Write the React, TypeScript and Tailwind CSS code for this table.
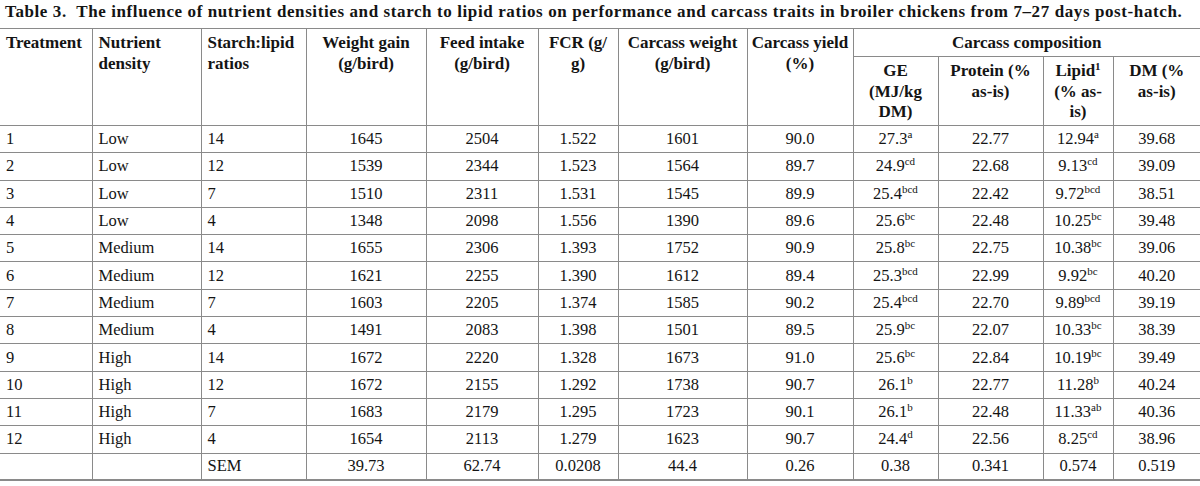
const cols = [92, 109, 105, 120, 112, 80, 129, 106, 85, 105, 70, 87];

type Row = {
	t: string;
	n: string;
	r: string;
	wg: string;
	fi: string;
	fcr: string;
	cw: string;
	cy: string;
	ge: [string, string];
	pr: string;
	li: [string, string];
	dm: string;
};

const rows: Row[] = [
	{ t: "1", n: "Low", r: "14", wg: "1645", fi: "2504", fcr: "1.522", cw: "1601", cy: "90.0", ge: ["27.3", "a"], pr: "22.77", li: ["12.94", "a"], dm: "39.68" },
	{ t: "2", n: "Low", r: "12", wg: "1539", fi: "2344", fcr: "1.523", cw: "1564", cy: "89.7", ge: ["24.9", "cd"], pr: "22.68", li: ["9.13", "cd"], dm: "39.09" },
	{ t: "3", n: "Low", r: "7", wg: "1510", fi: "2311", fcr: "1.531", cw: "1545", cy: "89.9", ge: ["25.4", "bcd"], pr: "22.42", li: ["9.72", "bcd"], dm: "38.51" },
	{ t: "4", n: "Low", r: "4", wg: "1348", fi: "2098", fcr: "1.556", cw: "1390", cy: "89.6", ge: ["25.6", "bc"], pr: "22.48", li: ["10.25", "bc"], dm: "39.48" },
	{ t: "5", n: "Medium", r: "14", wg: "1655", fi: "2306", fcr: "1.393", cw: "1752", cy: "90.9", ge: ["25.8", "bc"], pr: "22.75", li: ["10.38", "bc"], dm: "39.06" },
	{ t: "6", n: "Medium", r: "12", wg: "1621", fi: "2255", fcr: "1.390", cw: "1612", cy: "89.4", ge: ["25.3", "bcd"], pr: "22.99", li: ["9.92", "bc"], dm: "40.20" },
	{ t: "7", n: "Medium", r: "7", wg: "1603", fi: "2205", fcr: "1.374", cw: "1585", cy: "90.2", ge: ["25.4", "bcd"], pr: "22.70", li: ["9.89", "bcd"], dm: "39.19" },
	{ t: "8", n: "Medium", r: "4", wg: "1491", fi: "2083", fcr: "1.398", cw: "1501", cy: "89.5", ge: ["25.9", "bc"], pr: "22.07", li: ["10.33", "bc"], dm: "38.39" },
	{ t: "9", n: "High", r: "14", wg: "1672", fi: "2220", fcr: "1.328", cw: "1673", cy: "91.0", ge: ["25.6", "bc"], pr: "22.84", li: ["10.19", "bc"], dm: "39.49" },
	{ t: "10", n: "High", r: "12", wg: "1672", fi: "2155", fcr: "1.292", cw: "1738", cy: "90.7", ge: ["26.1", "b"], pr: "22.77", li: ["11.28", "b"], dm: "40.24" },
	{ t: "11", n: "High", r: "7", wg: "1683", fi: "2179", fcr: "1.295", cw: "1723", cy: "90.1", ge: ["26.1", "b"], pr: "22.48", li: ["11.33", "ab"], dm: "40.36" },
	{ t: "12", n: "High", r: "4", wg: "1654", fi: "2113", fcr: "1.279", cw: "1623", cy: "90.7", ge: ["24.4", "d"], pr: "22.56", li: ["8.25", "cd"], dm: "38.96" },
];

function Sup({ v }: { v: [string, string] }) {
	return (
		<>
			{v[0]}
			<sup className="text-[11px] relative -top-[6px]">{v[1]}</sup>
		</>
	);
}

const th = "border border-[#8a8a8a] align-top font-bold text-[17px] pt-[4px] leading-[20.5px]";
const td = "border border-[#8a8a8a] h-[27.3px] px-[6px] py-0 leading-[20px]";

export default function App() {
	return (
		<div className="w-[1200px] h-[486px] bg-white text-[#141414] font-['Liberation_Serif',serif] text-[16.5px] overflow-hidden">
			<div className="h-[28px] pl-[5px] pt-[3px] font-bold text-[17px] tracking-[0.6px] leading-[18px] whitespace-nowrap">
				Table 3.&nbsp; The influence of nutrient densities and starch to lipid ratios on performance and carcass traits in broiler chickens from 7–27 days post-hatch.
			</div>
			<table className="table-fixed border-collapse w-[1200px] border-b-[2px] border-b-[#8a8a8a] [&_tr>*:first-child]:border-l-0 [&_tr>*:last-child]:border-r-0">
				<colgroup>
					{cols.map((w, i) => (
						<col key={i} style={{ width: w }} />
					))}
				</colgroup>
				<thead>
					<tr className="h-[28px]">
						<th rowSpan={2} className={`${th} px-[6px] text-left`}>Treatment</th>
						<th rowSpan={2} className={`${th} px-[6px] text-left`}>Nutrient density</th>
						<th rowSpan={2} className={`${th} px-[6px] text-left`}>Starch:lipid ratios</th>
						<th rowSpan={2} className={`${th} px-[6px] text-center`}>Weight gain (g/bird)</th>
						<th rowSpan={2} className={`${th} px-[6px] text-center`}>Feed intake (g/bird)</th>
						<th rowSpan={2} className={`${th} px-[6px] text-center`}>FCR (g/ g)</th>
						<th rowSpan={2} className={`${th} px-[4px] text-center`}>Carcass weight (g/bird)</th>
						<th rowSpan={2} className={`${th} px-[2px] text-center`}>Carcass yield (%)</th>
						<th colSpan={4} className={`${th} px-[6px] text-center`}>Carcass composition</th>
					</tr>
					<tr className="h-[69px]">
						<th className={`${th} text-center px-[10px]`}>GE (MJ/kg DM)</th>
						<th className={`${th} px-[6px] text-center`}>Protein (% as-is)</th>
						<th className={`${th} px-[6px] text-center`}>
							Lipid<sup className="text-[11px] relative -top-[6px]">1</sup> (% as-is)
						</th>
						<th className={`${th} px-[6px] text-center`}>DM (% as-is)</th>
					</tr>
				</thead>
				<tbody>
					{rows.map((r) => (
						<tr key={r.t}>
							<td className={`${td} text-left`}>{r.t}</td>
							<td className={`${td} text-left`}>{r.n}</td>
							<td className={`${td} text-left`}>{r.r}</td>
							<td className={`${td} text-center`}>{r.wg}</td>
							<td className={`${td} text-center`}>{r.fi}</td>
							<td className={`${td} text-center`}>{r.fcr}</td>
							<td className={`${td} text-center`}>{r.cw}</td>
							<td className={`${td} text-center`}>{r.cy}</td>
							<td className={`${td} text-center`}>
								<Sup v={r.ge} />
							</td>
							<td className={`${td} text-center`}>{r.pr}</td>
							<td className={`${td} text-center`}>
								<Sup v={r.li} />
							</td>
							<td className={`${td} text-center`}>{r.dm}</td>
						</tr>
					))}
					<tr>
						<td className={td}></td>
						<td className={td}></td>
						<td className={`${td} text-left`}>SEM</td>
						<td className={`${td} text-center`}>39.73</td>
						<td className={`${td} text-center`}>62.74</td>
						<td className={`${td} text-center`}>0.0208</td>
						<td className={`${td} text-center`}>44.4</td>
						<td className={`${td} text-center`}>0.26</td>
						<td className={`${td} text-center`}>0.38</td>
						<td className={`${td} text-center`}>0.341</td>
						<td className={`${td} text-center`}>0.574</td>
						<td className={`${td} text-center`}>0.519</td>
					</tr>
				</tbody>
			</table>
		</div>
	);
}
